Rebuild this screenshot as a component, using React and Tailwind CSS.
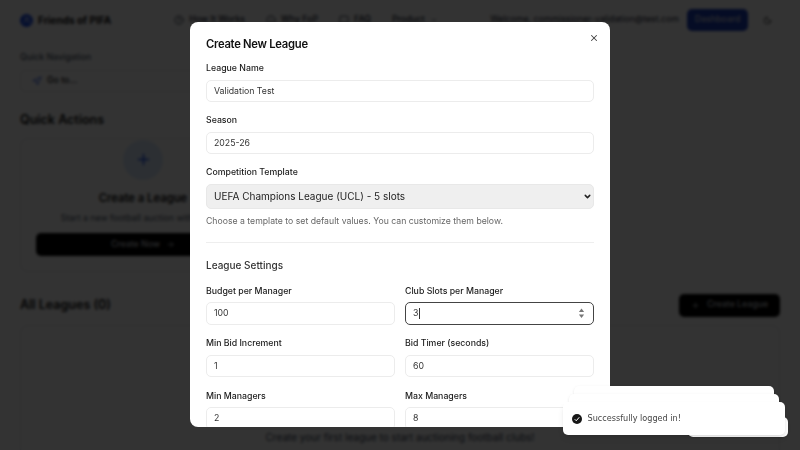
import { CircleHelp, Info, MessageSquare, ChevronDown, Moon, Navigation, Plus, ArrowRight, X, Users } from 'lucide-react';

const inter = { fontFamily: 'Inter, sans-serif' };

function Field({ label, value, focused }) {
  return (
    <div>
      <label className="block text-[8.75px] leading-[12.5px] font-medium text-[#1a1a1a] mb-[5px]">{label}</label>
      <div className="relative">
        <input
          type="text"
          defaultValue={value}
          className={`block w-full h-[22.5px] px-[7px] rounded-[5px] bg-white text-[8.75px] text-[#333] outline-none border ${focused ? 'border-[#444]' : 'border-[#ececec]'}`}
        />
        {focused && (
          <>
            {/* caret and number spinner of the focused field */}
            <span className="absolute left-[14px] top-[6px] w-px h-[11px] bg-[#333]" />
            <svg viewBox="0 0 8 12" className="absolute right-[9px] top-[6px] w-[7px] h-[10.5px]" fill="#777">
              <path d="M4 0.5L7 4.5H1Z" />
              <path d="M4 11.5L1 7.5H7Z" />
            </svg>
          </>
        )}
      </div>
    </div>
  );
}

function Page() {
  return (
    <div className="w-[800px] h-[450px] overflow-hidden bg-white text-[#111]">
      <header className="h-[40px] flex items-center pl-5 whitespace-nowrap">
        <div className="w-[13px] h-[13px] rounded-full bg-blue-700 flex items-center justify-center">
          <Users className="w-[8px] h-[8px] text-white" />
        </div>
        <span className="ml-[5px] text-[10px] font-bold">Friends of PIFA</span>
        <nav className="ml-[63px] flex items-center text-[8.75px] font-medium text-gray-800">
          <CircleHelp className="w-[10px] h-[10px]" />
          <span className="ml-[5px]">How It Works</span>
          <Info className="w-[10px] h-[10px] ml-[21px]" />
          <span className="ml-[5px]">Why FoP</span>
          <MessageSquare className="w-[10px] h-[10px] ml-[21px]" />
          <span className="ml-[5px]">FAQ</span>
          <span className="ml-[21px]">Product</span>
          <ChevronDown className="w-[8px] h-[8px] ml-[5px]" />
        </nav>
        <span className="ml-auto text-[8.75px] text-gray-800">Welcome, commissioner-validation@test.com</span>
        <button className="ml-[8px] w-[61px] h-[22px] rounded-[5px] bg-blue-800 text-gray-300 text-[8.75px] font-medium">Dashboard</button>
        <Moon className="w-[9px] h-[9px] ml-[15px] mr-[28px]" />
      </header>
      <main className="px-5">
        <p className="mt-[11px] text-[8.75px] leading-[12.5px] font-medium text-gray-600">Quick Navigation</p>
        <div className="mt-[6px] w-[200px] h-[22px] rounded-[5px] border border-gray-200 flex items-center pl-[11px] text-[8.75px] font-medium">
          <Navigation className="w-[10px] h-[10px] text-blue-700" />
          <span className="ml-[5px]">Go to...</span>
        </div>
        <h2 className="mt-[19px] text-[12.5px] leading-[18px] font-semibold">Quick Actions</h2>
        <div className="mt-[9px] w-[246px] h-[134px] rounded-lg border border-gray-200 px-[15px] flex flex-col items-center whitespace-nowrap">
          <div className="mt-[1px] w-[40px] h-[40px] rounded-full bg-blue-100 flex items-center justify-center">
            <Plus className="w-[17px] h-[17px] text-blue-700" />
          </div>
          <p className="mt-[10px] text-[11.25px] leading-[16px] font-semibold">Create a League</p>
          <p className="mt-[6px] text-[8.75px] leading-[12.5px] text-gray-600">Start a new football auction with friends</p>
          <button className="mt-[9px] w-full h-[23px] rounded-[5px] bg-black text-gray-300 text-[8.75px] font-medium flex items-center justify-center gap-[6px]">
            Create Now
            <ArrowRight className="w-[9px] h-[9px]" />
          </button>
        </div>
        <div className="mt-[22px] flex items-center justify-between">
          <h2 className="text-[12.5px] leading-[18px] font-semibold">All Leagues (0)</h2>
          <button className="w-[101px] h-[23px] rounded-[5px] bg-black text-gray-300 text-[8.75px] font-medium flex items-center justify-center gap-[7px]">
            <Plus className="w-[9px] h-[9px]" />
            Create League
          </button>
        </div>
        <div className="mt-[8px] h-[140px] rounded-lg border border-gray-200 flex justify-center pt-[104px] text-[10px] text-gray-700">
          Create your first league to start auctioning football clubs!
        </div>
      </main>
    </div>
  );
}

export default function App() {
  return (
    <div className="relative w-[800px] h-[450px] overflow-hidden" style={inter}>
      <Page />
      {/* dimmed backdrop */}
      <div className="absolute inset-0 bg-black/80 backdrop-blur-[1.5px]" />

      {/* modal */}
      <div className="absolute left-[190px] top-[22px] w-[420px] h-[405px] bg-white rounded-lg overflow-hidden px-4 pt-[15px]">
        <button className="absolute right-[11px] top-[11px] text-[#444]">
          <X className="w-[10px] h-[10px]" strokeWidth={2.5} />
        </button>
        <h2 className="text-[11.25px] leading-[14px] font-semibold tracking-tight text-[#111]">Create New League</h2>
        <div className="mt-[11px] flex flex-col gap-[12px]">
          <Field label="League Name" value="Validation Test" />
          <Field label="Season" value="2025-26" />
          <div>
            <label className="block text-[8.75px] leading-[12.5px] font-medium text-[#1a1a1a] mb-[5px]">Competition Template</label>
            <div className="relative">
              <select className="block appearance-none w-full h-[25.5px] px-[7px] rounded-[5px] bg-[#efefef] text-[10px] text-[#222] border border-[#e8e8e8]" defaultValue="ucl">
                <option value="ucl">UEFA Champions League (UCL) - 5 slots</option>
              </select>
              <ChevronDown className="absolute right-[2px] top-[8px] w-[9px] h-[9px] text-[#222]" strokeWidth={4} />
            </div>
            <p className="mt-[6px] text-[8.7px] leading-[12.5px] text-[#666]">Choose a template to set default values. You can customize them below.</p>
          </div>
        </div>
        <div className="mt-[14px] border-t border-[#eee] pt-[15px]">
          <h3 className="text-[10px] leading-[15px] font-medium text-[#333]">League Settings</h3>
          <div className="mt-[12px] grid grid-cols-2 gap-x-[10px] gap-y-[12.5px]">
            <Field label="Budget per Manager" value="100" />
            <Field label="Club Slots per Manager" value="3" focused />
            <Field label="Min Bid Increment" value="1" />
            <Field label="Bid Timer (seconds)" value="60" />
            <Field label="Min Managers" value="2" />
            <Field label="Max Managers" value="8" />
          </div>
        </div>
      </div>

      {/* stacked toasts */}
      <div className="absolute left-[574px] top-[386px] w-[200px] h-[40px] bg-white rounded-[5px] shadow-sm" />
      <div className="absolute left-[569px] top-[394px] w-[210px] h-[36px] bg-white rounded-[5px] shadow-sm" />
      <div className="absolute left-[688px] top-[417px] w-[99.5px] h-[20px] bg-white rounded-[5px] shadow-sm" />
      <div className="absolute left-[562.5px] top-[402px] w-[222.5px] h-[33px] bg-white rounded-[5px] shadow-md flex items-center pl-[9.5px] gap-[5.5px]">
        <svg viewBox="0 0 20 20" className="w-[10px] h-[10px]">
          <circle cx="10" cy="10" r="10" fill="#171717" />
          <path d="M5.5 10.5l3 3 6-7" fill="none" stroke="#fff" strokeWidth="2" />
        </svg>
        <span className="text-[8.125px] text-[#444]" style={{ fontFamily: '"DejaVu Sans", sans-serif' }}>Successfully logged in!</span>
      </div>
    </div>
  );
}
